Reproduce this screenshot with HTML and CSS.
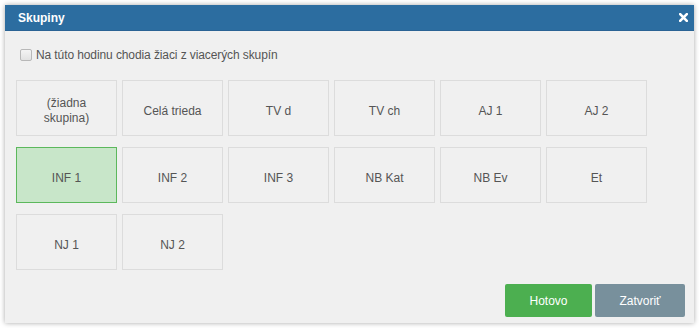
FILE: index.html
```
<!DOCTYPE html>
<html lang="sk">
<head>
  <meta charset="UTF-8" />
  <title>Skupiny</title>
  <link rel="stylesheet" href="styles.css">
</head>
<body>
  <div class="dialog">
    <div class="dialog-head">
      <span class="title">Skupiny</span>
      <svg class="close" width="9" height="9" viewBox="0 0 9 9">
        <path d="M1.2 1.2 L7.8 7.8 M7.8 1.2 L1.2 7.8" stroke="#fff" stroke-width="2.6" stroke-linecap="square"/>
      </svg>
    </div>
    <div class="dialog-body">
      <label class="multi">
        <input type="checkbox">
        <span>Na túto hodinu chodia žiaci z viacerých skupín</span>
      </label>
      <div class="groups">
        <div class="group">(žiadna<br>skupina)</div>
        <div class="group">Celá trieda</div>
        <div class="group">TV d</div>
        <div class="group">TV ch</div>
        <div class="group">AJ 1</div>
        <div class="group">AJ 2</div>
        <div class="group selected">INF 1</div>
        <div class="group">INF 2</div>
        <div class="group">INF 3</div>
        <div class="group">NB Kat</div>
        <div class="group">NB Ev</div>
        <div class="group">Et</div>
        <div class="group">NJ 1</div>
        <div class="group">NJ 2</div>
      </div>
    </div>
    <div class="dialog-foot">
      <button class="btn ok">Hotovo</button>
      <button class="btn cancel">Zatvoriť</button>
    </div>
  </div>
</body>
</html>
```
FILE: styles.css
```
body {
  margin: 0;
  padding: 5px;
  background: #fff;
  font-family: "Liberation Sans", Arial, sans-serif;
  font-size: 12px;
  color: #555;
}
.dialog {
  width: 689px;
  height: 318px;
  background: #f0f0f0;
  box-shadow: 0 0 5px rgba(0, 0, 0, 0.35);
  display: flex;
  flex-direction: column;
}
.dialog-head {
  height: 26px;
  background: #2c6da0;
  border-bottom: 1px solid #2a6394;
  box-sizing: border-box;
  display: flex;
  align-items: center;
  justify-content: space-between;
  padding: 0 6px 0 13px;
}
.title {
  color: #fff;
  font-weight: bold;
  font-size: 12px;
}
.dialog-body {
  padding: 16px 11px 0;
}
.multi {
  display: flex;
  align-items: center;
  height: 16px;
  letter-spacing: -0.1px;
}
.multi input {
  appearance: none;
  margin: 0 4px 0 4px;
  width: 12px;
  height: 12px;
  border: 1px solid #b8b8b8;
  border-radius: 2px;
  background: linear-gradient(#f4f4f4, #e2e2e2);
}
.groups {
  margin-top: 17px;
  display: flex;
  flex-wrap: wrap;
  gap: 11px 5px;
  width: 640px;
}
.group {
  width: 101px;
  height: 56px;
  box-sizing: border-box;
  border: 1px solid #dcdcdc;
  padding-top: 6px;
  display: flex;
  align-items: center;
  justify-content: center;
  text-align: center;
  line-height: 15px;
}
.group.selected {
  background: #c8e6c9;
  border-color: #5cb85c;
}
.dialog-foot {
  margin-top: auto;
  display: flex;
  justify-content: flex-end;
  gap: 3px;
  padding: 0 9px 6px;
}
.btn {
  height: 33px;
  border: none;
  border-radius: 2px;
  color: #fff;
  font-family: "Liberation Sans", Arial, sans-serif;
  font-size: 12px;
}
.ok {
  width: 87px;
  background: #4caf50;
}
.cancel {
  width: 90px;
  background: #78909c;
}
```
